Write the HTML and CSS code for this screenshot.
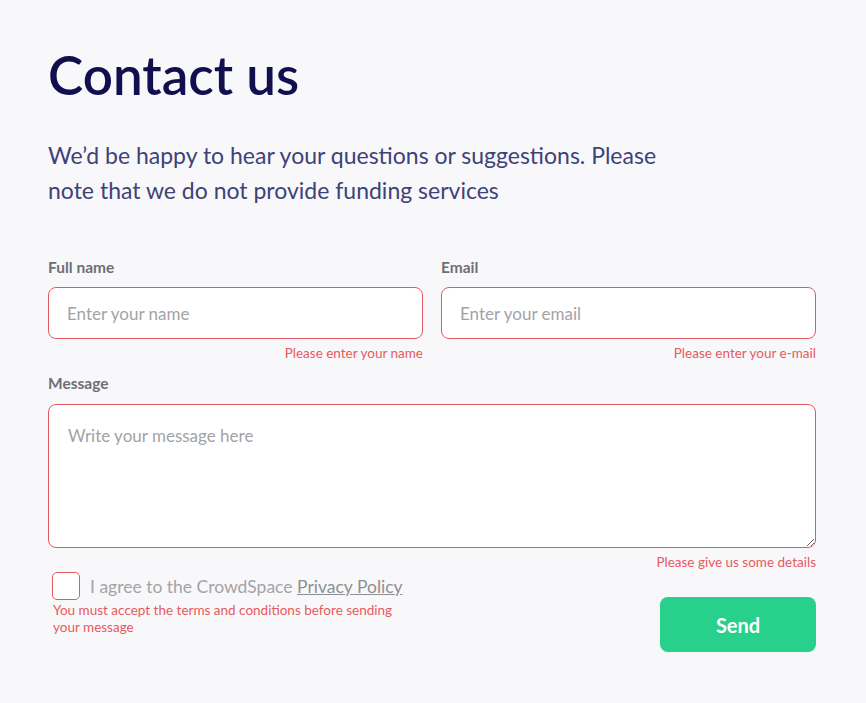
FILE: index.html
```html
<!DOCTYPE html>
<html lang="en">
<head>
<meta charset="utf-8">
<title>Contact us</title>
<link rel="stylesheet" href="styles.css">
</head>
<body>
<main class="page">
  <h1 class="title">Contact us</h1>
  <p class="lead">We’d be happy to hear your questions or suggestions. Please note that we do not provide funding services</p>
  <form class="form">
    <div class="row">
      <div class="field">
        <label class="label">Full name</label>
        <input class="input" type="text" placeholder="Enter your name">
        <div class="error">Please enter your name</div>
      </div>
      <div class="field">
        <label class="label">Email</label>
        <input class="input" type="text" placeholder="Enter your email">
        <div class="error">Please enter your e-mail</div>
      </div>
    </div>
    <div class="field">
      <label class="label label-msg">Message</label>
      <textarea class="input textarea" placeholder="Write your message here"></textarea>
      <div class="error">Please give us some details</div>
    </div>
    <div class="bottom">
      <div class="agree">
        <label class="check-row"><span class="checkbox"></span><span class="agree-text">I agree to the CrowdSpace <a class="link" href="#">Privacy Policy</a></span></label>
        <div class="error left">You must accept the terms and conditions before sending your message</div>
      </div>
      <button class="send" type="button">Send</button>
    </div>
  </form>
</main>
</body>
</html>
```

FILE: styles.css
```css
* { box-sizing: border-box; }
html, body { margin: 0; background: #f8f8fb; }
body { font-family: "Lato", "Open Sans", sans-serif; }
.page { width: 866px; padding: 40px 50px 0 48px; }
.title {
  margin: 0;
  font-size: 53px;
  line-height: 70px;
  font-weight: 600;
  color: #110f4e;
  letter-spacing: 0;
}
.lead {
  margin: 28px 0 0;
  width: 640px;
  font-size: 23px;
  line-height: 35px;
  color: #3e4277;
}
.form { margin-top: 49px; width: 768px; }
.row { display: flex; gap: 18px; }
.row .field { flex: 1; }
.field { display: flex; flex-direction: column; }
.label {
  font-size: 15.5px;
  line-height: 20px;
  font-weight: 700;
  color: #6f6f73;
  margin-bottom: 10px;
}
.label-msg { margin-bottom: 11px; }
.input {
  height: 52px;
  border: 1px solid #df5b60;
  border-radius: 8px;
  background: #fff;
  padding: 0 18px;
  font-family: inherit;
  font-size: 17px;
  color: #333;
  outline: none;
}
.input::placeholder { color: #a3a3a6; }
.textarea { height: 144px; padding: 20px 19px; resize: vertical; }
.error {
  text-align: right;
  font-size: 13.5px;
  line-height: 16px;
  color: #e65a5d;
  margin-top: 6px;
  margin-bottom: 12px;
}
.error.left { text-align: left; margin: 2px 0 0 5px; width: 350px; font-size: 13.5px; line-height: 17px; }
.bottom { display: flex; justify-content: space-between; align-items: flex-start; margin-top: -10px; }
.check-row { display: flex; align-items: center; gap: 10px; padding-left: 4px; }
.checkbox {
  width: 28px; height: 28px;
  border: 1px solid #df5b60;
  border-radius: 5px;
  background: #fff;
}
.agree-text { font-size: 17.5px; color: #a3a3a6; }
.link { color: #8f8f93; text-decoration: underline; }
.send {
  margin-top: 25px;
  width: 156px; height: 55px;
  border: 0; border-radius: 8px;
  background: #27d18b;
  color: #fff;
  font-family: inherit;
  font-size: 20px;
  font-weight: 700;
}
```
